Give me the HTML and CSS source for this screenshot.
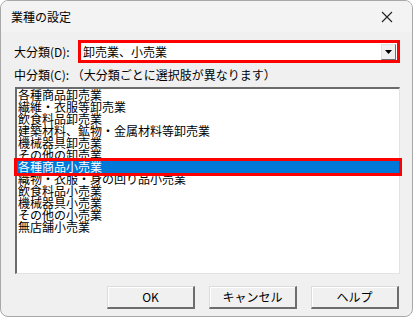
FILE: index.html
```html
<!DOCTYPE html>
<html lang="ja">
<head>
    <meta charset="UTF-8">
    <title>業種の設定</title>
    <link rel="stylesheet" href="styles.css">
</head>
<body>

    <div class="window">
        <div class="titlebar">
            <span class="title">業種の設定</span>
            <svg class="close" width="12" height="12" viewBox="0 0 12 12">
                <path d="M1 1 L11 11 M11 1 L1 11" stroke="#222" stroke-width="1.1" fill="none"/>
            </svg>
        </div>

        <div class="content">
            <div class="row-major">
                <span class="label">大分類(D):</span>
                <div class="combo">
                    <span class="combo-text">卸売業、小売業</span>
                    <span class="combo-btn">
                        <svg width="7" height="4" viewBox="0 0 7 4"><path d="M0 0 H7 L3.5 4 Z" fill="#000"/></svg>
                    </span>
                </div>
            </div>

            <div class="label sub-label">中分類(C): （大分類ごとに選択肢が異なります）</div>

            <ul class="listbox">
                <li>各種商品卸売業</li>
                <li>繊維・衣服等卸売業</li>
                <li>飲食料品卸売業</li>
                <li>建築材料、鉱物・金属材料等卸売業</li>
                <li>機械器具卸売業</li>
                <li>その他の卸売業</li>
                <li class="selected">各種商品小売業</li>
                <li>織物・衣服・身の回り品小売業</li>
                <li>飲食料品小売業</li>
                <li>機械器具小売業</li>
                <li>その他の小売業</li>
                <li>無店舗小売業</li>
            </ul>

            <div class="buttons">
                <button>OK</button>
                <button>キャンセル</button>
                <button>ヘルプ</button>
            </div>
        </div>
    </div>

</body>
</html>
```

FILE: styles.css
```css
body {
    margin: 0;
    background: #ffffff;
    font-family: "Noto Sans CJK JP", "Liberation Sans", sans-serif;
    font-size: 12px;
    color: #000;
}
.window {
    width: 411px;
    height: 315px;
    border: 1px solid #a8a8a8;
    border-radius: 8px;
    background: #f0f0f0;
    overflow: hidden;
}
.titlebar {
    height: 31px;
    display: flex;
    align-items: center;
    justify-content: space-between;
    padding: 0 19px 0 10px;
    background: #f3f3f3;
}
.title { font-size: 12px; line-height: 14px; }
.close { display: block; }

.content { padding: 8px 12px 0 13px; }

.row-major {
    display: flex;
    align-items: center;
    height: 23px;
}
.label { line-height: 14px; white-space: nowrap; }
.row-major .label { width: 64px; }
.combo {
    flex: 1;
    height: 17px;
    border: 3px solid #ff0000;
    background: #fff;
    display: flex;
    align-items: center;
    justify-content: space-between;
    padding-left: 2px;
}
.combo-text { line-height: 14px; }
.combo-btn {
    width: 15px;
    height: 14px;
    margin-right: 1px;
    background: #f0f0f0;
    border-top: 1px solid #e3e3e3;
    border-left: 1px solid #e3e3e3;
    border-right: 1px solid #6d6d6d;
    border-bottom: 1px solid #6d6d6d;
    display: flex;
    align-items: center;
    justify-content: center;
    box-sizing: border-box;
    height: 16px;
}
.combo-btn svg { display: block; }

.sub-label { margin-top: 5px; }

.listbox {
    list-style: none;
    margin: 5px 0 0 1px;
    padding: 0 0 0 0;
    height: 184px;
    background: #fff;
    border-top: 2px solid #6b6b6b;
    border-left: 2px solid #6b6b6b;
    border-right: 1px solid #e3e3e3;
    border-bottom: 1px solid #e3e3e3;
}
.listbox li {
    height: 12px;
    line-height: 12px;
    padding-left: 1px;
    white-space: nowrap;
}
.listbox li.selected {
    background: #0078d7;
    color: #fff;
    outline: 3px solid #ff0000;
}

.buttons {
    display: flex;
    justify-content: flex-end;
    gap: 14px;
    margin-top: 12px;
    padding-right: 1px;
}
button {
    width: 88px;
    height: 23px;
    font-family: "Noto Sans CJK JP", "Liberation Sans", sans-serif;
    font-size: 12px;
    line-height: 14px;
    padding: 0;
    background: #f0f0f0;
    border-top: 1px solid #dcdcdc;
    border-left: 1px solid #dcdcdc;
    border-right: 2px solid #6d6d6d;
    border-bottom: 2px solid #6d6d6d;
    box-shadow: inset 1px 1px 0 #ffffff;
    color: #000;
}
```
